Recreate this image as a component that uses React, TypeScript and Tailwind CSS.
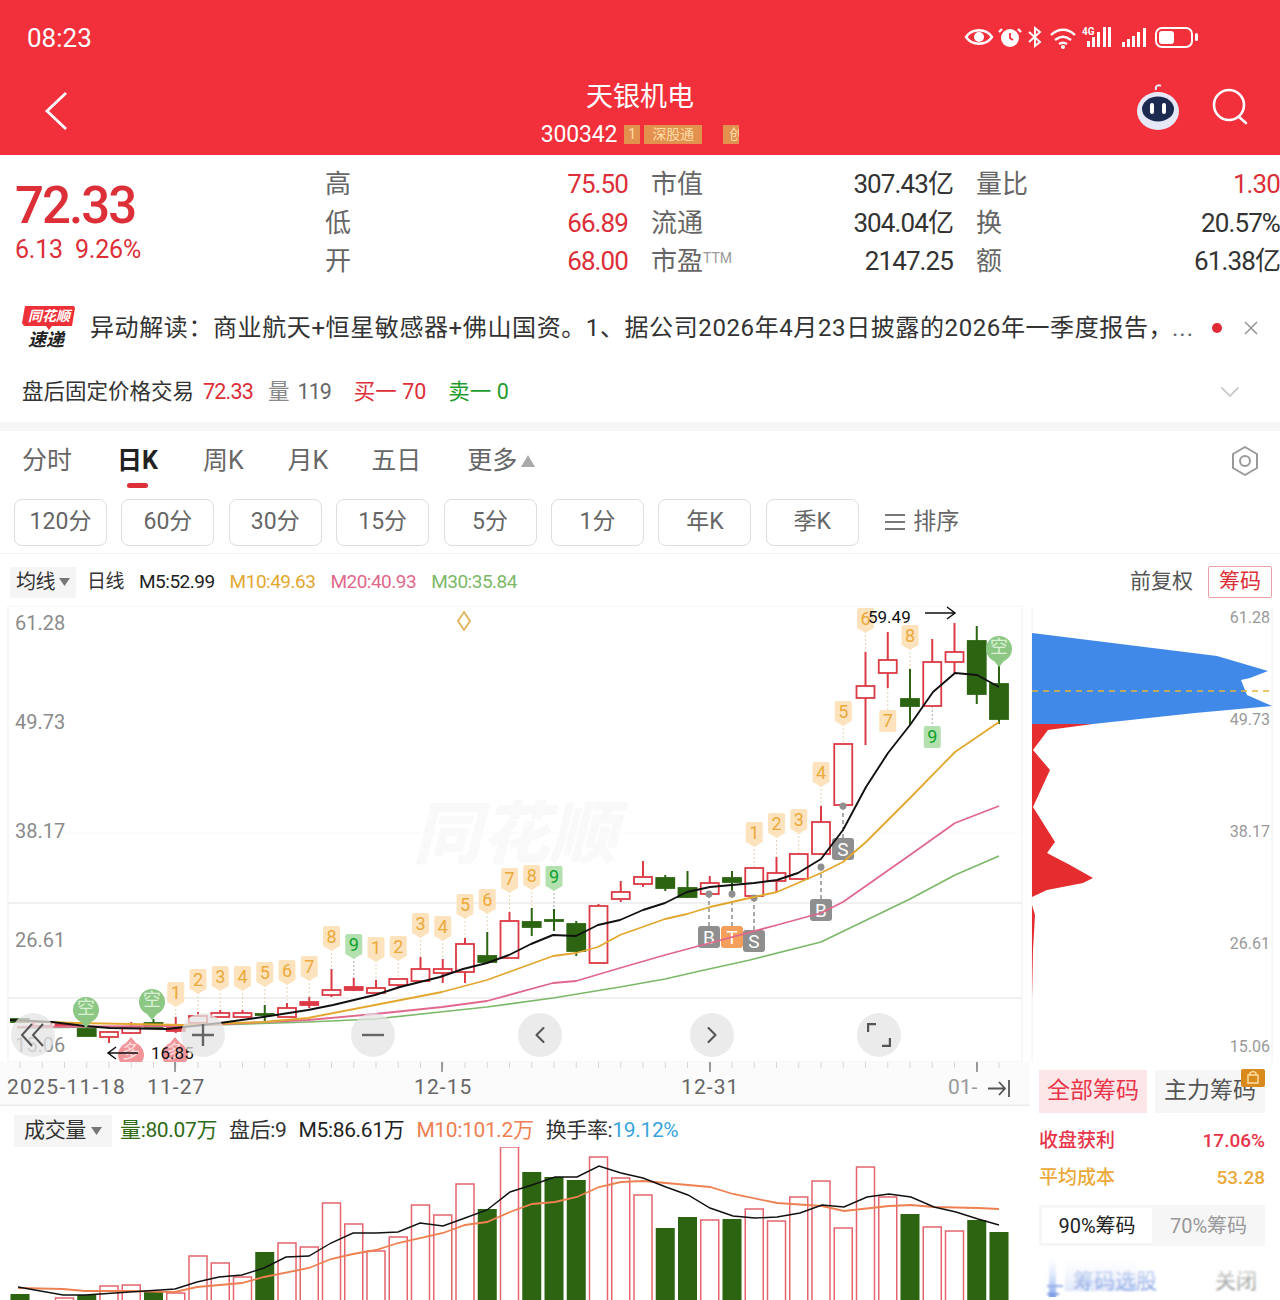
import React from 'react'
import { ChevronDown, ChevronLeft, ChevronRight, X } from 'lucide-react'

type Candle = [kind: 'r' | 'g', top: number, bottom: number, wickTop: number, wickBottom: number]
type Pt = [number, number]

// index 0 is the rightmost candle
const candles: Candle[] = [
  ['g', 684, 719, 666, 724], ['g', 641, 694, 626, 704], ['r', 652, 662, 623, 673], ['r', 662, 706, 639, 706],
  ['g', 699, 706, 669, 725], ['r', 660, 673, 632, 688], ['r', 686, 698, 652, 745], ['r', 744, 805, 744, 805],
  ['r', 822, 854, 806, 854], ['r', 854, 879, 854, 879], ['r', 873, 881, 857, 892], ['r', 868, 896, 868, 896],
  ['g', 878, 882, 871, 895], ['r', 883, 894, 876, 894], ['g', 888, 897, 871, 898], ['g', 878, 888, 875, 891],
  ['r', 877, 884, 861, 887], ['r', 892, 899, 881, 902], ['r', 906, 963, 904, 964], ['g', 924, 951, 921, 956],
  ['g', 920, 921, 909, 931], ['g', 922, 927, 908, 936], ['r', 921, 958, 912, 958], ['g', 956, 962, 932, 962],
  ['r', 944, 972, 938, 983], ['r', 969, 973, 959, 983], ['r', 969, 981, 957, 981], ['r', 979, 985, 979, 988],
  ['r', 988, 993, 980, 993], ['r', 987, 990, 978, 991], ['r', 990, 995, 969, 997], ['r', 1002, 1005, 997, 1008],
  ['r', 1008, 1017, 1003, 1017], ['g', 1014, 1015, 1005, 1022], ['r', 1013, 1017, 1010, 1018], ['r', 1013, 1017, 1010, 1017],
  ['r', 1016, 1023, 1012, 1023], ['r', 1028, 1031, 1017, 1033], ['g', 1023, 1027, 1019, 1027], ['r', 1027, 1033, 1022, 1033],
  ['r', 1032, 1037, 1032, 1043], ['g', 1029, 1036, 1026, 1036], ['r', 1024, 1027, 1024, 1027], ['r', 1022, 1026, 1022, 1026],
  ['g', 1019, 1022, 1019, 1022],
]
const cx = (i: number) => 999 - 22.25 * i

const tags: { i: number; label: string; y: number; below?: boolean; green?: boolean }[] = [
  { i: 37, label: '1', y: 993 }, { i: 36, label: '2', y: 980 }, { i: 35, label: '3', y: 977 }, { i: 34, label: '4', y: 977 },
  { i: 33, label: '5', y: 973 }, { i: 32, label: '6', y: 971 }, { i: 31, label: '7', y: 967 }, { i: 30, label: '8', y: 937 },
  { i: 29, label: '9', y: 945, green: true }, { i: 28, label: '1', y: 948 }, { i: 27, label: '2', y: 947 },
  { i: 26, label: '3', y: 924 }, { i: 25, label: '4', y: 927 }, { i: 24, label: '5', y: 905 }, { i: 23, label: '6', y: 900 },
  { i: 22, label: '7', y: 879 }, { i: 21, label: '8', y: 876 }, { i: 20, label: '9', y: 877, green: true },
  { i: 11, label: '1', y: 833 }, { i: 10, label: '2', y: 824 }, { i: 9, label: '3', y: 820 }, { i: 8, label: '4', y: 773 },
  { i: 7, label: '5', y: 712 }, { i: 6, label: '6', y: 619 }, { i: 4, label: '8', y: 636 },
  { i: 5, label: '7', y: 721, below: true }, { i: 3, label: '9', y: 737, below: true, green: true },
]

const trades: { x: number; dot: number; y: number; label: string; color: string }[] = [
  { x: 843, dot: 806, y: 849, label: 'S', color: '#8f8f8f' },
  { x: 821, dot: 867, y: 910, label: 'B', color: '#8f8f8f' },
  { x: 709, dot: 894, y: 937, label: 'B', color: '#8f8f8f' },
  { x: 732, dot: 894, y: 937, label: 'T', color: '#f59f5c' },
  { x: 754, dot: 898, y: 941, label: 'S', color: '#8f8f8f' },
]

const ma5: Pt[] = [[10, 1020], [52, 1022], [85, 1026], [110, 1028], [167, 1029], [220, 1023], [263, 1017], [308, 1010], [333, 1005], [375, 995], [400, 987], [440, 977], [463, 969], [487, 963], [509, 955], [531, 944], [553, 935], [576, 936], [598, 925], [620, 920], [643, 910], [665, 903], [687, 892], [710, 887], [754, 883], [777, 880], [798, 873], [821, 859], [843, 830], [866, 787], [888, 753], [910, 725], [933, 692], [955, 673], [977, 675], [999, 687]]
const ma10: Pt[] = [[17, 1021], [77, 1023], [183, 1025], [263, 1022], [308, 1018], [375, 1005], [442, 992], [487, 980], [553, 956], [576, 953], [598, 947], [620, 935], [665, 919], [687, 914], [710, 907], [754, 897], [777, 892], [821, 873], [843, 862], [866, 842], [910, 798], [955, 752], [999, 722]]
const ma20: Pt[] = [[17, 1027], [183, 1026], [308, 1020], [375, 1014], [442, 1007], [487, 1001], [553, 983], [576, 981], [620, 968], [665, 955], [710, 943], [777, 925], [821, 913], [843, 902], [910, 855], [955, 823], [999, 806]]
const ma30: Pt[] = [[17, 1028], [183, 1026], [308, 1022], [375, 1019], [440, 1012], [487, 1007], [553, 998], [620, 987], [665, 979], [700, 971], [750, 960], [821, 942], [910, 899], [955, 875], [999, 856]]

// [kind, top]
const volumes: ['r' | 'g', number][] = [
  ['g', 1294], ['r', 1302], ['r', 1298], ['g', 1295], ['r', 1286], ['r', 1285], ['g', 1292], ['r', 1293], ['r', 1256], ['r', 1263],
  ['r', 1277], ['g', 1252], ['r', 1243], ['r', 1247], ['r', 1203], ['r', 1224], ['r', 1251], ['r', 1237], ['r', 1205], ['r', 1215],
  ['r', 1184], ['g', 1209], ['r', 1147], ['g', 1172], ['g', 1177], ['g', 1180], ['r', 1157], ['r', 1178], ['r', 1195], ['g', 1228],
  ['g', 1217], ['r', 1220], ['g', 1219], ['r', 1209], ['r', 1221], ['r', 1197], ['r', 1181], ['r', 1228], ['r', 1167], ['r', 1197],
  ['g', 1214], ['r', 1227], ['r', 1231], ['g', 1220], ['g', 1232],
]
const volMa5: Pt[] = [[18, 1287], [63, 1295], [85, 1295], [130, 1292], [175, 1289], [197, 1282], [219, 1277], [242, 1275], [264, 1268], [286, 1257], [309, 1256], [331, 1243], [353, 1233], [376, 1233], [398, 1232], [420, 1223], [443, 1226], [465, 1218], [487, 1210], [510, 1192], [532, 1185], [555, 1177], [577, 1177], [599, 1166], [621, 1173], [643, 1178], [666, 1187], [688, 1195], [710, 1208], [733, 1216], [755, 1218], [777, 1217], [800, 1213], [822, 1205], [844, 1207], [867, 1197], [889, 1194], [911, 1197], [934, 1207], [956, 1212], [978, 1219], [999, 1225]]
const volMa10: Pt[] = [[18, 1288], [63, 1289], [85, 1291], [130, 1291], [175, 1292], [197, 1287], [242, 1283], [264, 1277], [309, 1268], [331, 1259], [353, 1254], [376, 1250], [398, 1243], [443, 1233], [465, 1225], [487, 1222], [510, 1212], [532, 1204], [555, 1202], [577, 1197], [599, 1187], [621, 1182], [643, 1181], [666, 1183], [710, 1187], [733, 1194], [777, 1203], [822, 1206], [844, 1211], [889, 1206], [911, 1205], [934, 1207], [978, 1208], [999, 1209]]

const toPoints = (pts: Pt[]) => pts.map((p) => p.join(',')).join(' ')

const blue = '1032,633 1217,656 1268,671 1250,678 1241,680 1247,695 1272,706 1195,713 1093,724 1032,724'
const red = '1032,724 1093,724 1048,730 1033,750 1050,770 1033,807 1055,842 1047,853 1070,865 1093,878 1083,883 1047,890 1032,897 1032,905 1035,915 1033,950 1032,1000'

const periods = ['120分', '60分', '30分', '15分', '5分', '1分', '年K', '季K']

const StatusIcons: React.FC = () => (
  <svg className="w-[245px] h-[36px]" viewBox="960 20 245 36" fill="none" stroke="white">
    {/* eye */}
    <path d="M966 37c6-9 20-9 26 0-6 9-20 9-26 0z" strokeWidth={2.4} />
    <circle cx={979} cy={37} r={5} fill="white" stroke="none" />
    {/* alarm */}
    <circle cx={1010} cy={38} r={9} fill="white" stroke="none" />
    <path d="M1002 29l-3 3M1018 29l3 3" strokeWidth={2.4} />
    <path d="M1010 33v5l3 2" stroke="#f1303c" strokeWidth={1.8} />
    {/* bluetooth */}
    <path d="M1029 32l11 10-5 4V28l5 4-11 10" strokeWidth={2} />
    {/* wifi */}
    <path d="M1051 35c7-7 17-7 24 0M1055 40c5-4 11-4 16 0M1059 44c3-2 5-2 8 0" strokeWidth={2.4} />
    <circle cx={1063} cy={47} r={2} fill="white" stroke="none" />
    {/* signal bars */}
    <g fill="white" stroke="none">
      <rect x={1087} y={41} width={3} height={6} />
      <rect x={1092} y={37} width={3} height={10} />
      <rect x={1097} y={32} width={3} height={15} />
      <rect x={1103} y={27} width={3} height={20} />
      <rect x={1108} y={27} width={3} height={20} />
      <rect x={1122} y={42} width={3} height={5} />
      <rect x={1127} y={39} width={3} height={8} />
      <rect x={1132} y={36} width={3} height={11} />
      <rect x={1137} y={32} width={3} height={15} />
      <rect x={1143} y={28} width={3} height={19} />
      <text x={1082} y={35} fontSize={10} fontWeight={700}>4G</text>
    </g>
    {/* battery */}
    <rect x={1156} y={28} width={36} height={19} rx={6} strokeWidth={2} />
    <rect x={1159} y={31} width={15} height={13} rx={3} fill="white" stroke="none" />
    <rect x={1195} y={33} width={3} height={8} rx={1.5} fill="white" stroke="none" />
  </svg>
)

const RobotIcon: React.FC = () => (
  <svg className="w-[46px] h-[50px]" viewBox="0 0 46 50">
    <path d="M21 8c-1-4 2-6 5-4" fill="none" stroke="#e8e8f5" strokeWidth={2} />
    <ellipse cx={23} cy={29} rx={21} ry={19} fill="#e6e8f8" />
    <ellipse cx={23} cy={27} rx={16} ry={12.5} fill="#1c2a50" />
    <rect x={15} y={21} width={4} height={11} rx={2} fill="white" />
    <rect x={27} y={21} width={4} height={11} rx={2} fill="white" />
  </svg>
)

const SearchIcon: React.FC = () => (
  <svg className="w-[40px] h-[40px]" viewBox="0 0 40 40" fill="none" stroke="white" strokeWidth={2.6}>
    <circle cx={19} cy={18} r={15} />
    <path d="M29 30l7 6" strokeLinecap="round" />
  </svg>
)

const Logo: React.FC = () => (
  <svg className="w-[54px] h-[46px] shrink-0" viewBox="0 0 54 46">
    <path d="M3 1h49l1 2-3 18H30l-3 4-3-4H2L0 18z" fill="#ee3138" />
    <text x={6} y={16} fill="white" fontSize={14} fontWeight={700} fontStyle="italic">同花顺</text>
    <text x={6} y={41} fill="#222" fontSize={18} fontWeight={700} fontStyle="italic">速递</text>
  </svg>
)

const Chart: React.FC = () => (
  <svg className="w-[1030px] h-[500px]" viewBox="0 606 1030 500" fontFamily="Roboto, 'Noto Sans CJK SC', sans-serif">
    <rect x={8} y={606} width={1014} height={456} fill="white" stroke="#f0f0f0" />
    <path d="M8 833h1014" stroke="#f9f9f9" />
    <path d="M8 903h1014M8 998h1014" stroke="#ececec" strokeWidth={1.5} />
    <text x={515} y={858} textAnchor="middle" fontSize={68} fontWeight={900} fontStyle="italic" fill="#f9f9f9">同花顺</text>

    {[['61.28', 630], ['49.73', 729], ['38.17', 838], ['26.61', 947], ['15.06', 1052]].map(([t, y]) => (
      <text key={t} x={15} y={y} fontSize={20} fill="#8b8b8b">{t}</text>
    ))}

    <path d="M464 612l6 9-6 9-6-9z" fill="none" stroke="#e2b45a" strokeWidth={1.8} />

    {/* dotted connectors */}
    {tags.map((t) => (
      <line
        key={`c${t.i}`}
        x1={cx(t.i)} x2={cx(t.i)}
        y1={t.below ? candles[t.i][4] : t.y + 12}
        y2={t.below ? t.y - 10 : candles[t.i][3]}
        stroke={t.green ? '#aaa' : '#e6d3b0'}
        strokeDasharray="2 2"
      />
    ))}

    {/* candles */}
    {candles.map(([kind, top, bottom, wt, wb], i) => {
      const x = cx(i)
      const color = kind === 'r' ? '#dc3a45' : '#2d6412'
      const solid = kind === 'g' || bottom - top < 4
      return (
        <g key={i} stroke={color}>
          <line x1={x} x2={x} y1={wt} y2={top} strokeWidth={2} />
          <line x1={x} x2={x} y1={bottom} y2={wb} strokeWidth={2} />
          <rect x={x - 9} y={top} width={18} height={bottom - top} fill={solid ? color : 'white'} strokeWidth={1.8} />
        </g>
      )
    })}

    {/* trade marks */}
    {trades.map((t) => (
      <g key={`${t.x}`}>
        <line x1={t.x} x2={t.x} y1={t.dot} y2={t.y} stroke="#8f8f8f" strokeWidth={1.5} strokeDasharray="4 3" />
        <circle cx={t.x} cy={t.dot} r={3.5} fill="#8f8f8f" />
        <rect x={t.x - 11} y={t.y - 11} width={22} height={22} rx={3} fill={t.color} />
        <text x={t.x} y={t.y + 7} textAnchor="middle" fontSize={19} fill="white">{t.label}</text>
      </g>
    ))}

    <g fill="none" strokeLinejoin="round">
      <polyline points={toPoints(ma30)} stroke="#7cb869" strokeWidth={1.7} />
      <polyline points={toPoints(ma20)} stroke="#e0688c" strokeWidth={1.8} />
      <polyline points={toPoints(ma10)} stroke="#e3a72f" strokeWidth={1.8} />
      <polyline points={toPoints(ma5)} stroke="#111" strokeWidth={1.9} />
    </g>

    {/* number tags */}
    {tags.map((t) => (
      <g key={`t${t.i}`}>
        <path
          d={
            t.below
              ? `M${cx(t.i) - 8.5} ${t.y - 9}q0-2 2-2h13q2 0 2 2v18q0 2-2 2h-13q-2 0-2-2z`
              : `M${cx(t.i) - 8.5} ${t.y - 9}q0-2 2-2h13q2 0 2 2v17q0 2-2 2l-6.5 4-6.5-4q-2 0-2-2z`
          }
          fill={t.green ? '#b3e0ae' : '#fde3bd'}
        />
        <text x={cx(t.i)} y={t.y + 6} textAnchor="middle" fontSize={18} fill={t.green ? '#0ca32a' : '#eba93a'}>{t.label}</text>
      </g>
    ))}

    {/* pins */}
    {[[999, 647], [86, 1008], [152, 1000]].map(([x, y]) => (
      <g key={x}>
        <path d={`M${x} ${y + 20}l-5-6a13 13 0 1 1 10 0z`} fill="#8cc783" />
        <text x={x} y={y + 6} textAnchor="middle" fontSize={18} fill="#d9f0d5">空</text>
      </g>
    ))}
    {[131, 175].map((x) => (
      <g key={x}>
        <path d={`M${x} 1037l-5 6a13 13 0 1 0 10 0z`} fill="#f0969a" />
        <text x={x} y={1058} textAnchor="middle" fontSize={18} fill="#fbdcdc">多</text>
      </g>
    ))}

    <text x={868} y={623} fontSize={17} fill="#111">59.49</text>
    <path d="M925 613h30M947 607l8 6-8 6" fill="none" stroke="#111" strokeWidth={1.5} />
    <text x={151} y={1059} fontSize={17} fill="#111">16.85</text>
    <path d="M138 1053h-30M116 1047l-8 6 8 6" fill="none" stroke="#111" strokeWidth={1.5} />

    {/* x axis */}
    <rect x={0} y={1062} width={1030} height={44} fill="#fbfbfb" />
    {Array.from({ length: 45 }, (_, i) => (
      <line key={i} x1={cx(i)} x2={cx(i)} y1={1062} y2={1068} stroke="#d8d8d8" />
    ))}
    {[175, 442, 710, 977].map((x) => (
      <line key={x} x1={x} x2={x} y1={1062} y2={1072} stroke="#777" strokeWidth={1.4} />
    ))}
    <g fontSize={21} fill="#666">
      <text x={7} y={1094} letterSpacing={1.3}>2025-11-18</text>
      <text x={147} y={1094} letterSpacing={1.1}>11-27</text>
      <text x={414} y={1094} letterSpacing={1.1}>12-15</text>
      <text x={681} y={1094} letterSpacing={1.1}>12-31</text>
      <text x={948} y={1094} fill="#999">01-</text>
    </g>
    <path d="M1009 1080v17M988 1088.500h17M999 1082l6 6.500-6 6.500" fill="none" stroke="#555" strokeWidth={1.8} />
    <path d="M0 1105.500h1030" stroke="#ececec" strokeWidth={2} />
  </svg>
)

const ChipChart: React.FC = () => (
  <svg className="w-[250px] h-[456px]" viewBox="1030 606 250 456" fontFamily="Roboto, sans-serif">
    <path d="M1032 606v456M1272 606v456" stroke="#f2f2f2" />
    <polygon points={blue} fill="#4189e8" />
    <polygon points={red} fill="#e52d2f" />
    <path d="M1032 691h238" stroke="#e3b53a" strokeWidth={1.5} strokeDasharray="6 5" />
    {[['61.28', 623], ['49.73', 725], ['38.17', 837], ['26.61', 949], ['15.06', 1052]].map(([t, y]) => (
      <text key={t} x={1270} y={y} textAnchor="end" fontSize={16} fill="#999">{t}</text>
    ))}
  </svg>
)

const VolumeChart: React.FC = () => (
  <svg className="w-[1030px] h-[153px]" viewBox="0 1147 1030 153">
    {volumes.map(([kind, top], i) => {
      const x = 999 - 22.25 * (44 - i)
      return kind === 'g' ? (
        <rect key={i} x={x - 9.5} y={top} width={19} height={1320 - top} fill="#2d6412" />
      ) : (
        <rect key={i} x={x - 9} y={top} width={18} height={1320 - top} fill="white" stroke="#e4656e" strokeWidth={1.5} />
      )
    })}
    <polyline points={toPoints(volMa10)} fill="none" stroke="#ee8052" strokeWidth={1.8} />
    <polyline points={toPoints(volMa5)} fill="none" stroke="#111" strokeWidth={1.4} />
  </svg>
)

const RoundBtn: React.FC<{ left: string; children: React.ReactNode }> = ({ left, children }) => (
  <div className={`absolute top-[407px] ${left} w-[44px] h-[44px] rounded-full bg-[#e4e4e4]/75 flex items-center justify-center text-[#555]`}>
    {children}
  </div>
)

const QuoteCell: React.FC<{ label: React.ReactNode; value: string; red?: boolean }> = ({ label, value, red }) => (
  <div className="flex justify-between">
    <span className="text-[#666] tracking-normal">{label}</span>
    <span className={red ? 'text-[#dc2f38]' : ''}>{value}</span>
  </div>
)

export default function App() {
  return (
    <div className="w-[1280px] h-[1300px] overflow-hidden bg-white font-['Roboto','Noto_Sans_CJK_SC',sans-serif] text-[#333]">
      {/* Red header */}
      <header className="h-[155px] bg-[#f1303c] text-white">
        <div className="h-[76px] flex items-center justify-between pl-[27px] pr-[75px]">
          <span className="text-[26px]">08:23</span>
          <StatusIcons />
        </div>
        <div className="h-[79px] flex items-start justify-between pl-[44px] pr-[30px]">
          <svg className="w-[24px] h-[40px] mt-[15px]" viewBox="0 0 24 40" fill="none" stroke="white" strokeWidth={2.8}>
            <path d="M22 2L3 20l19 18" />
          </svg>
          <div className="flex flex-col items-center ml-[77px]">
            <div className="text-[27px] leading-[42px]">天银机电</div>
            <div className="flex items-center h-[32px] text-[23px] leading-none tracking-[-0.2px]">
              <span>300342</span>
              <span className="ml-[7px] w-[16px] h-[19px] bg-[#e2924e] text-[14px] text-[#ffdca8] flex items-center justify-center">1</span>
              <span className="ml-[4px] w-[58px] h-[19px] bg-[#e2924e] text-[14px] text-[#ffdca8] flex items-center justify-center">深股通</span>
              <span className="ml-[21px] w-[16px] h-[19px] bg-[#e2924e] text-[14px] text-[#ffdca8] flex items-center justify-center overflow-hidden">
                <span className="translate-x-[5px]">创</span>
              </span>
            </div>
          </div>
          <div className="flex items-center gap-[29px] mt-[6px]">
            <RobotIcon />
            <SearchIcon />
          </div>
        </div>
      </header>

      {/* Quote */}
      <section className="h-[135px] flex">
        <div className="w-[326px] pl-[15px] pt-[21px]">
          <div className="text-[51px] leading-[60px] font-medium tracking-[-2px] text-[#dc2f38]">72.33</div>
          <div className="text-[25px] leading-[30px] -mt-[1px] text-[#dc2f38] tracking-[-0.2px]">6.13&nbsp;&nbsp;9.26%</div>
        </div>
        <div className="flex-1 grid grid-cols-[303px_302px_304px] gap-x-[23px] content-start pt-[10px] text-[26px] leading-[38.500px] tracking-[-0.9px]">
          <QuoteCell label="高" value="75.50" red />
          <QuoteCell label="市值" value="307.43亿" />
          <QuoteCell label="量比" value="1.30" red />
          <QuoteCell label="低" value="66.89" red />
          <QuoteCell label="流通" value="304.04亿" />
          <QuoteCell label="换" value="20.57%" />
          <QuoteCell label="开" value="68.00" red />
          <QuoteCell label={<>市盈<sup className="text-[14px] text-[#999]">TTM</sup></>} value="2147.25" />
          <QuoteCell label="额" value="61.38亿" />
        </div>
      </section>

      {/* News ticker */}
      <div className="h-[70px] flex items-center pl-[22px] pt-[5px]">
        <Logo />
        <p className="ml-[14px] w-[1070px] shrink-0 text-[24px] tracking-[0.6px] whitespace-nowrap">
          异动解读：商业航天+恒星敏感器+佛山国资。1、据公司2026年4月23日披露的2026年一季度报告，
        </p>
        <span className="ml-[12px] w-[22px] text-[24px] tracking-[1px] text-[#666]">...</span>
        <span className="ml-[18px] w-[10px] h-[10px] rounded-full bg-[#e02a35]" />
        <X className="ml-[18px] w-[22px] h-[22px] text-[#999]" strokeWidth={1.8} />
      </div>

      {/* After hours */}
      <div className="h-[62px] flex items-center pl-[22px] pr-[34px] text-[21.500px] pt-[2px]">
        <span>盘后固定价格交易</span>
        <span className="ml-[9px] text-[#dc2f38] tracking-[-0.8px]">72.33</span>
        <span className="ml-[15px] text-[#888]">量</span>
        <span className="ml-[8px] text-[#666] tracking-[-1px]">119</span>
        <span className="ml-[23px] text-[#dc2f38]">买一 70</span>
        <span className="ml-[22px] text-[#1f9c2d]">卖一 0</span>
        <ChevronDown className="ml-auto w-[32px] h-[32px] text-[#ccc]" strokeWidth={1.4} />
      </div>

      <div className="h-[9px] bg-[#f6f6f6]" />

      {/* Period tabs */}
      <nav className="h-[60px] flex items-center pl-[22px] pr-[20px] text-[25px] text-[#666]">
        <span>分时</span>
        <span className="relative ml-[45px] font-bold text-[#222]">
          日K
          <span className="absolute left-[10px] -bottom-[8px] w-[21px] h-[5px] rounded-full bg-[#dc2f38]" />
        </span>
        <span className="ml-[45px]">周K</span>
        <span className="ml-[44px]">月K</span>
        <span className="ml-[43px]">五日</span>
        <span className="ml-[46px]">更多</span>
        <svg className="ml-[4px] w-[14px] h-[12px]" viewBox="0 0 14 12"><path d="M7 0l7 12H0z" fill="#aaa" /></svg>
        <svg className="ml-auto w-[30px] h-[32px]" viewBox="0 0 30 32" fill="none" stroke="#999" strokeWidth={2}>
          <path d="M15 2l12 7v14l-12 7-12-7V9z" strokeLinejoin="round" />
          <circle cx={15} cy={16} r={5} />
        </svg>
      </nav>

      <div className="h-[62px] flex items-center pl-[14px] gap-[14.400px]">
        {periods.map((p) => (
          <div key={p} className="w-[93px] h-[47px] flex items-center justify-center rounded-lg border border-[#ddd] text-[23px] text-[#666]">
            {p}
          </div>
        ))}
        <div className="ml-[11px] flex items-center gap-[7px] text-[23px] text-[#666]">
          <svg className="w-[22px] h-[18px]" viewBox="0 0 22 18" stroke="#777" strokeWidth={2}><path d="M1 2h20M1 9h20M1 16h20" /></svg>
          排序
        </div>
      </div>

      {/* MA legend */}
      <div className="h-[53px] flex items-center border-t border-[#f3f3f3] pl-[10px] pr-[8px] pt-[4px] text-[19px] tracking-[-0.5px]">
        <div className="w-[66px] h-[31px] bg-[#f5f5f5] flex items-center justify-center gap-[4px] text-[20px]">
          均线
          <svg className="w-[11px] h-[8px]" viewBox="0 0 11 8"><path d="M0 0h11L5.500 8z" fill="#777" /></svg>
        </div>
        <span className="ml-[11px]">日线</span>
        <span className="ml-[15px] text-[#222]">M5:52.99</span>
        <span className="ml-[15px] text-[#e3a72f]">M10:49.63</span>
        <span className="ml-[15px] text-[#e0688c]">M20:40.93</span>
        <span className="ml-[15px] text-[#7cb869]">M30:35.84</span>
        <span className="ml-auto text-[21px] text-[#555] tracking-normal">前复权</span>
        <span className="ml-[15px] w-[64px] h-[32px] border border-[#e8a0a4] rounded-[2px] flex items-center justify-center text-[21px] tracking-normal text-[#dc2f38]">筹码</span>
      </div>

      <div className="flex">
        {/* Price + volume */}
        <div className="relative w-[1030px] shrink-0">
          <Chart />
          <RoundBtn left="left-[11px]">
            <svg className="w-[26px] h-[24px]" viewBox="0 0 26 24" fill="none" stroke="#555" strokeWidth={2}><path d="M12 1L2 12l10 11M23 1L13 12l10 11" /></svg>
          </RoundBtn>
          <RoundBtn left="left-[181px]">
            <svg className="w-[22px] h-[22px]" viewBox="0 0 22 22" stroke="#666" strokeWidth={2.4}><path d="M11 0v22M0 11h22" /></svg>
          </RoundBtn>
          <RoundBtn left="left-[351px]">
            <svg className="w-[22px] h-[4px]" viewBox="0 0 22 4" stroke="#666" strokeWidth={2.4}><path d="M0 2h22" /></svg>
          </RoundBtn>
          <RoundBtn left="left-[518px]"><ChevronLeft className="w-[28px] h-[28px]" strokeWidth={1.8} /></RoundBtn>
          <RoundBtn left="left-[690px]"><ChevronRight className="w-[28px] h-[28px]" strokeWidth={1.8} /></RoundBtn>
          <RoundBtn left="left-[857px]">
            <svg className="w-[24px] h-[24px]" viewBox="0 0 24 24" fill="none" stroke="#555" strokeWidth={2.4}><path d="M1 9V1h8M23 15v8h-8" /></svg>
          </RoundBtn>

          <div className="h-[41px] flex items-center pl-[14px] pt-[9px] text-[21px] tracking-[-0.35px]">
            <div className="w-[98px] h-[32px] bg-[#f5f5f5] flex items-center justify-center gap-[5px]">
              成交量
              <svg className="w-[11px] h-[8px]" viewBox="0 0 11 8"><path d="M0 0h11L5.500 8z" fill="#777" /></svg>
            </div>
            <span className="ml-[8px] text-[#2f6a15]">量:80.07万</span>
            <span className="ml-[12px]">盘后:9</span>
            <span className="ml-[12px] text-[#222]">M5:86.61万</span>
            <span className="ml-[12px] text-[#ee8052]">M10:101.2万</span>
            <span className="ml-[12px]">换手率:<span className="text-[#39a6dd]">19.12%</span></span>
          </div>
          <VolumeChart />
        </div>

        {/* Chip distribution */}
        <aside className="relative w-[250px] shrink-0">
          <ChipChart />
          <div className="px-[9px] pr-[15px] pt-[8px]">
            <div className="flex gap-[8px] text-[23px] whitespace-nowrap">
              <div className="w-[108px] h-[43px] bg-[#fde6e8] text-[#e8354a] flex items-center justify-center">全部筹码</div>
              <div className="relative w-[110px] h-[43px] bg-[#f6f6f6] text-[#555] flex items-center justify-center">
                主力筹码
                <svg className="absolute -top-[1px] right-0 w-[24px] h-[18px]" viewBox="0 0 24 18">
                  <rect width={24} height={18} rx={2} fill="#d98a1c" />
                  <path d="M9 6V4q3-3 6 0v2M7 6h10v8H7z" fill="none" stroke="#ffe0a8" strokeWidth={1.4} />
                </svg>
              </div>
            </div>
            <div className="mt-[9px] flex justify-between text-[#e8354a] text-[19px] leading-[37px] font-medium"><span>收盘获利</span><span>17.06%</span></div>
            <div className="flex justify-between text-[#eba93a] text-[19px] leading-[37px] font-medium"><span>平均成本</span><span>53.28</span></div>
            <div className="mt-[9px] flex h-[41px] p-[3px] pr-0 bg-[#f6f6f6] text-[20px]">
              <div className="w-[110px] bg-white flex items-center justify-center text-[#222]">90%筹码</div>
              <div className="flex-1 flex items-center justify-center text-[#999]">70%筹码</div>
            </div>
            <div className="relative mt-[6px] h-[45px] flex items-end justify-between text-[21px] pl-[8px] pr-[8px]">
              <div className="absolute left-[10px] top-0 bottom-0 w-[7px] bg-gradient-to-b from-white to-[#4f7fe0]" />
              <div className="absolute left-[26px] top-0 bottom-[6px] w-[72px] bg-gradient-to-b from-white to-[#c9d8f6]" />
              <div className="relative flex items-end gap-[10px] text-[#2f5fd0]">
                <svg className="w-[16px] h-[14px]" viewBox="0 0 16 14" fill="#2f5fd0"><path d="M0 2h16v2H0zM0 10h12v2H0z" /></svg>
                筹码选股
              </div>
              <span className="relative text-[#444]">关闭</span>
              <div className="absolute inset-0 bg-gradient-to-b from-white to-white/30 backdrop-blur-[1px]" />
            </div>
          </div>
        </aside>
      </div>
    </div>
  )
}
